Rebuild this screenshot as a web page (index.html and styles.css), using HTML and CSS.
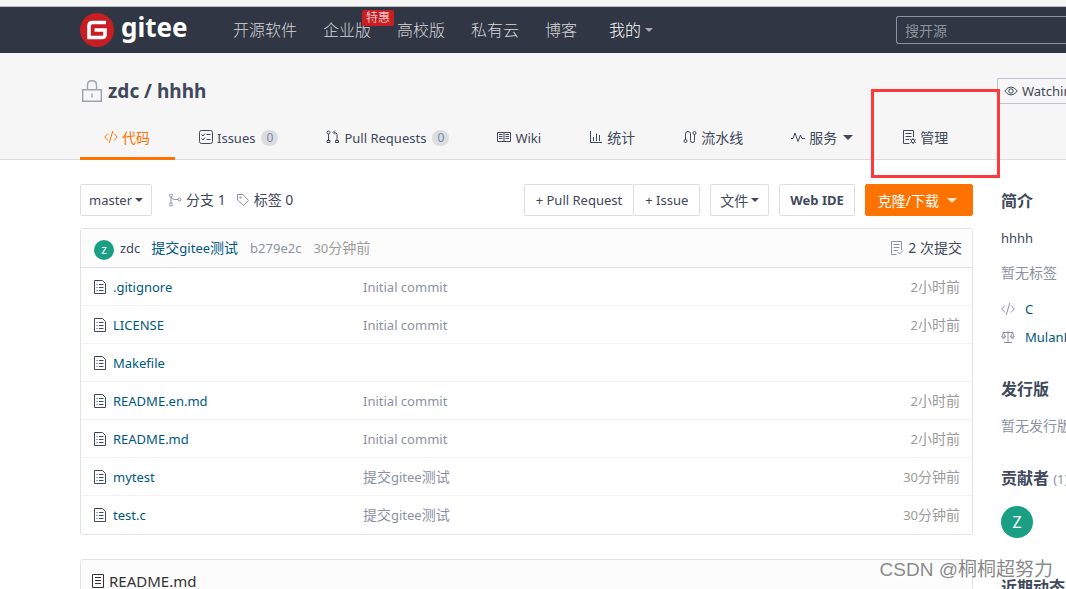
FILE: index.html
```html
<!DOCTYPE html>
<html lang="zh-CN">
<head>
<meta charset="utf-8">
<title>zdc / hhhh</title>
<link rel="stylesheet" href="styles.css">
</head>
<body>
<svg class="defs" aria-hidden="true">
  <symbol id="code" viewBox="0 0 14 14"><path d="M4 3.500L.7 7L4 10.500M10 3.500L13.300 7L10 10.500M8.800 1L5.200 13"/></symbol>
  <symbol id="issues" viewBox="0 0 14 14"><rect x=".5" y=".5" width="13" height="13" rx="2"/><path d="M2.500 4.500L4 6L6 3.500M7.500 4.500H11.500M2.500 8.500L4 10L6 7.500M7.500 9.500H11.500"/></symbol>
  <symbol id="pr" viewBox="0 0 14 14"><path d="M2.500 4V10M11 10V4.500Q11 2.500 8 2.500M9 .5L7 2.500L9 4.500M1 10.500H4V12.500H1ZM9.500 10.500H12.500V12.500H9.500Z"/><circle cx="2.500" cy="2.500" r="1.500"/></symbol>
  <symbol id="wiki" viewBox="0 0 14 14"><path d="M.5 2.500H13.500V11.500H.5ZM7 2.500V11.500M2 4.500H5.500M2 6.500H5.500M2 8.500H5.500M8.500 4.500H12M8.500 6.500H12M8.500 8.500H12"/></symbol>
  <symbol id="stats" viewBox="0 0 14 14"><path d="M1.500 1V12.500H13M4.500 11V7M7.500 11V3.500M10.500 11V5"/></symbol>
  <symbol id="pipe" viewBox="0 0 14 14"><path d="M2.500 9.500V4Q2.500 1.500 5 1.500T7.500 4V10.500Q7.500 12.500 9.500 12.500T11.500 10.500V4.500"/><circle cx="2.500" cy="11" r="1.500"/><circle cx="11.500" cy="3" r="1.500"/></symbol>
  <symbol id="pulse" viewBox="0 0 14 14"><path d="M0 8.500H2L4 3L7 11.500L9.500 5L11 8.500H14"/></symbol>
  <symbol id="manage" viewBox="0 0 14 14"><path d="M7.500 13.500H1.500V.5H11.500V7M3.500 3.500H9.500M3.500 6.500H9.500M3.500 9.500H7"/><circle cx="11" cy="11" r="1.700"/><path d="M11 8V9M11 13V14M8.300 9.500L9.300 10M12.700 12L13.700 12.500M13.700 9.500L12.700 10M9.300 12L8.300 12.500"/></symbol>
  <symbol id="branch" viewBox="0 0 14 14"><circle cx="3" cy="2.500" r="1.500"/><circle cx="3" cy="11.500" r="1.500"/><circle cx="11.500" cy="6.500" r="1.500"/><path d="M3 4V10M3 4Q4 6.500 7 6.500H10"/></symbol>
  <symbol id="tag" viewBox="0 0 14 14"><path d="M1.500 1.500H7L12.500 7.500L7.500 12.500L1.500 7Z"/><circle cx="4.500" cy="4.500" r=".8"/></symbol>
  <symbol id="file" viewBox="0 0 14 14"><path d="M1.500 .5H9.500L12.500 3.500V13.500H1.500ZM3.500 4.500H4.500M6 4.500H10.500M3.500 7.500H4.500M6 7.500H10.500M3.500 10.500H4.500M6 10.500H10.500"/></symbol>
  <symbol id="commits" viewBox="0 0 14 14"><path d="M6.500 13.500H1.500V.5H11.500V9M3.500 3.500H9.500M3.500 6.500H9.500M3.500 9.500H7.500M7.500 11L9.500 13L13 9.500"/></symbol>
  <symbol id="readme" viewBox="0 0 14 14"><path d="M1.500 .5H12.500V13.500H1.500ZM4 3.500H10M4 6.500H10M4 9.500H10"/></symbol>
  <symbol id="eye" viewBox="0 0 14 14"><path d="M.7 7Q3.500 3 7 3T13.300 7Q10.500 11 7 11T.7 7Z"/><circle cx="7" cy="7" r="2.200"/></symbol>
  <symbol id="scale" viewBox="0 0 14 14"><path d="M7 1V12.500M3 12.500H11M1.500 2.500H12.500M2.500 3L.7 7H4.600ZM11.500 3L9.400 7H13.300ZM1 8H4.300M9.700 8H13"/></symbol>
</svg>

<div class="chrome-edge"></div>
<header class="nav">
  <a class="logo" href="#">
    <svg class="logo-mark" viewBox="0 0 34 34"><circle cx="17" cy="17" r="17" fill="#c71d23"/><path d="M26 9.500H12.500Q9 9.500 9 13V24.500H22Q25 24.500 25 21.500V17H14.500" fill="none" stroke="#fff" stroke-width="3.600"/></svg>
    <span>gitee</span>
  </a>
  <nav class="nav-links">
    <a href="#">开源软件</a>
    <a href="#" class="with-flag">企业版<span class="flag">特惠</span></a>
    <a href="#">高校版</a>
    <a href="#">私有云</a>
    <a href="#">博客</a>
    <a href="#" class="mine">我的<i class="caret"></i></a>
  </nav>
  <input class="search" type="text" placeholder="搜开源" aria-label="搜开源">
</header>

<section class="repo-head">
  <div class="title-row">
    <h1><svg class="lock" viewBox="0 0 20 22"><path d="M5.500 9V5Q5.500 .7 10 .7T14.500 5V9M.7 9.700H19.300V21.300H.7ZM10 13.500V17.500"/></svg><span>zdc / hhhh</span></h1>
    <button class="btn watch"><svg class="icon"><use href="#eye"/></svg>Watching</button>
  </div>
  <nav class="tabs">
    <a href="#" class="tab active"><svg class="icon"><use href="#code"/></svg><span class="zh">代码</span></a>
    <a href="#" class="tab"><svg class="icon"><use href="#issues"/></svg>Issues<b class="count">0</b></a>
    <a href="#" class="tab"><svg class="icon"><use href="#pr"/></svg>Pull Requests<b class="count">0</b></a>
    <a href="#" class="tab"><svg class="icon"><use href="#wiki"/></svg>Wiki</a>
    <a href="#" class="tab"><svg class="icon"><use href="#stats"/></svg><span class="zh">统计</span></a>
    <a href="#" class="tab"><svg class="icon"><use href="#pipe"/></svg><span class="zh">流水线</span></a>
    <a href="#" class="tab"><svg class="icon"><use href="#pulse"/></svg><span class="zh">服务</span><i class="caret"></i></a>
    <a href="#" class="tab manage"><svg class="icon"><use href="#manage"/></svg><span class="zh">管理</span><span class="highlight"></span></a>
  </nav>
</section>

<div class="content">
  <main class="main">
    <div class="toolbar">
      <button class="btn">master<i class="caret"></i></button>
      <div class="refs">
        <a href="#"><svg class="icon"><use href="#branch"/></svg>分支 1</a>
        <a href="#"><svg class="icon"><use href="#tag"/></svg>标签 0</a>
      </div>
      <div class="actions">
        <div class="group"><button class="btn">+ Pull Request</button><button class="btn">+ Issue</button></div>
        <button class="btn zh">文件<i class="caret"></i></button>
        <button class="btn strong">Web IDE</button>
        <button class="btn primary zh">克隆/下载<i class="caret"></i></button>
      </div>
    </div>

    <div class="files">
      <div class="commit">
        <span class="avatar small">z</span>
        <span class="author">zdc</span>
        <a href="#"><span class="zh">提交</span>gitee<span class="zh">测试</span></a>
        <span class="sha">b279e2c</span>
        <span class="when">30<span class="zh">分钟前</span></span>
        <a href="#" class="total zh"><svg class="icon"><use href="#commits"/></svg>2 次提交</a>
      </div>
      <table>
        <tr><td class="name"><a href="#"><svg class="icon"><use href="#file"/></svg>.gitignore</a></td><td>Initial commit</td><td class="time">2<span class="zh">小时前</span></td></tr>
        <tr><td class="name"><a href="#"><svg class="icon"><use href="#file"/></svg>LICENSE</a></td><td>Initial commit</td><td class="time">2<span class="zh">小时前</span></td></tr>
        <tr><td class="name"><a href="#"><svg class="icon"><use href="#file"/></svg>Makefile</a></td><td></td><td class="time"></td></tr>
        <tr><td class="name"><a href="#"><svg class="icon"><use href="#file"/></svg>README.en.md</a></td><td>Initial commit</td><td class="time">2<span class="zh">小时前</span></td></tr>
        <tr><td class="name"><a href="#"><svg class="icon"><use href="#file"/></svg>README.md</a></td><td>Initial commit</td><td class="time">2<span class="zh">小时前</span></td></tr>
        <tr><td class="name"><a href="#"><svg class="icon"><use href="#file"/></svg>mytest</a></td><td><span class="zh">提交</span>gitee<span class="zh">测试</span></td><td class="time">30<span class="zh">分钟前</span></td></tr>
        <tr><td class="name"><a href="#"><svg class="icon"><use href="#file"/></svg>test.c</a></td><td><span class="zh">提交</span>gitee<span class="zh">测试</span></td><td class="time">30<span class="zh">分钟前</span></td></tr>
      </table>
    </div>

    <div class="readme"><svg class="icon"><use href="#readme"/></svg>README.md</div>
  </main>

  <aside class="side">
    <section class="intro">
      <h2>简介</h2>
      <p class="desc">hhhh</p>
      <p class="muted">暂无标签</p>
      <ul>
        <li><svg class="icon"><use href="#code"/></svg><a href="#">C</a></li>
        <li><svg class="icon"><use href="#scale"/></svg><a href="#">MulanPSL-2.0</a></li>
      </ul>
    </section>
    <section>
      <h2>发行版</h2>
      <p class="muted">暂无发行版</p>
    </section>
    <section class="people">
      <h2>贡献者 <small>(1)</small></h2>
      <span class="avatar">Z</span>
    </section>
    <section>
      <h2>近期动态</h2>
    </section>
  </aside>
</div>
<div class="watermark">CSDN @桐桐超努力</div>
</body>
</html>
```
FILE: styles.css
```css
* { box-sizing: border-box; }
html { height: 100%; overflow: hidden; }
body {
  position: relative;
  height: 100%;
  margin: 0;
  overflow: hidden;
  background: #fff;
  color: #40485b;
  font: 13px/20px "Noto Sans", "Noto Sans CJK SC", sans-serif;
  white-space: nowrap;
}
a { color: inherit; text-decoration: none; }
h1, h2, p, ul { margin: 0; padding: 0; list-style: none; }
.zh { font-size: 14px; }
.defs { position: absolute; width: 0; height: 0; }
.icon {
  flex: none;
  width: 14px;
  height: 14px;
  fill: none;
  stroke: currentColor;
}
.caret {
  display: inline-block;
  flex: none;
  border: 4px solid transparent;
  border-top-color: currentColor;
  border-bottom: 0;
}

.chrome-edge { height: 7px; background: #f5f5f5; border-bottom: 1px solid #b9bcba; }
.nav {
  display: flex;
  align-items: center;
  height: 46px;
  padding-left: 80px;
  background: #303643;
}
.logo { display: flex; align-items: center; gap: 7px; width: 153px; color: #fff; }
.logo-mark { width: 34px; height: 34px; }
.logo span { padding-bottom: 6px; font-size: 26px; font-weight: 700; line-height: 34px; }
.nav-links { display: flex; flex: 1; gap: 26px; color: #d6d7d9; font-size: 16px; font-weight: 300; line-height: 24px; }
.with-flag { position: relative; }
.flag {
  position: absolute;
  top: -8px;
  left: 39px;
  padding: 0 4px;
  border-radius: 2px;
  background: #c71d23;
  color: #fff;
  font-size: 12px;
  line-height: 16px;
}
.mine { display: flex; align-items: center; gap: 4px; margin-left: 6px; color: #fff; }
.mine .caret { color: #aaa; }
.search {
  width: 170px;
  height: 28px;
  padding: 0 8px;
  border: 1px solid #8c92a4;
  border-right: 0;
  border-radius: 3px 0 0 3px;
  background: transparent;
  font: 14px "Noto Sans CJK SC", sans-serif;
}
.search::placeholder { color: #8f939c; }

.repo-head { background: #f6f6f6; border-bottom: 1px solid #dcdcdc; padding: 25px 0 0 80px; }
.title-row { display: flex; justify-content: space-between; height: 38px; }
h1 { display: flex; align-items: center; gap: 6px; height: 26px; font-size: 19px; line-height: 26px; }
.lock { width: 20px; height: 22px; margin-left: 2px; fill: none; stroke: #9da2b4; stroke-width: 1.4; }
.watch { width: 69px; overflow: hidden; }
.title-row .watch { height: 26px; padding: 0 0 0 6px; gap: 4px; border-color: #c0c3cf; border-right: 0; border-radius: 2px 0 0 2px; background: transparent; justify-content: flex-start; }
.tabs { display: flex; margin-bottom: -1px; }
.tab { position: relative; display: flex; align-items: center; gap: 4px; height: 44px; padding: 2px 24px 0; border-bottom: 3px solid transparent; }
.tab.active { padding-right: 25px; color: #fe7300; border-color: #fe7300; }
.tab .icon { margin-top: -2px; }
.count { min-width: 17px; margin-left: 2px; border-radius: 8px; background: #dcdddf; color: #7686b0; font-size: 12px; font-weight: 400; line-height: 16px; text-align: center; }
.tab .caret { border-width: 5px 5px 0; margin-left: 2px; }
.manage { margin-left: 1px; }
.highlight { position: absolute; top: -27px; left: -7px; width: 129px; height: 89px; border: 3px solid #ff3939; }

.content { display: flex; gap: 28px; padding: 24px 0 0 80px; }
.main { flex: 1; min-width: 0; }
.toolbar { display: flex; align-items: center; margin-bottom: 12px; }
.btn {
  display: flex;
  align-items: center;
  justify-content: center;
  gap: 3px;
  height: 32px;
  padding: 0 8px;
  border: 1px solid #dce0e6;
  border-radius: 2px;
  background: #fff;
  color: inherit;
  font-family: inherit;
  font-size: 13px;
}
.btn.zh { font-size: 14px; padding: 0 9px; }
.refs { display: flex; gap: 10px; margin-left: 16px; font-size: 14px; }
.refs a { display: flex; align-items: center; gap: 4px; }
.refs .icon { stroke: #8c92a4; }
.actions { display: flex; gap: 10px; margin-left: auto; }
.group { display: flex; }
.group .btn { padding: 0 11px; }
.group .btn + .btn { margin-left: -1px; }
.btn.strong { padding: 0 10px; font-weight: 700; }
.btn.primary { gap: 8px; padding: 0 15px 0 12px; border-color: #fe7300; background: #fe7300; color: #fff; }
.primary .caret { border-width: 5px 5px 0; color: #ffe3cc; }

.files { border: 1px solid #e0e4e9; border-radius: 3px; }
.commit { display: flex; align-items: center; height: 39px; padding: 0 10px 0 13px; border-bottom: 1px solid #dce1e6; background: #fcfcfc; }
.commit > a { color: #005980; }
.commit .total { display: flex; align-items: center; gap: 4px; margin-left: auto; color: #40485b; }
.total .icon { stroke: #8c92a4; }
.author { margin: 0 11px 0 6px; }
.sha { margin: 0 12px; color: #8c92a4; }
.when { color: #9b9b9b; }
.avatar { display: flex; align-items: center; justify-content: center; width: 32px; height: 32px; border-radius: 50%; background: #1a9f85; color: #fff; font-size: 16px; }
.avatar.small { width: 20px; height: 20px; margin-top: 3px; font-size: 12px; }
table { width: 100%; border-spacing: 0; table-layout: fixed; }
td { height: 38px; padding: 0; border-bottom: 1px solid #f0f2f4; color: #8c92a4; }
tr:last-child td { border-bottom: 0; }
.name { width: 282px; padding-left: 12px; }
.name a { display: flex; align-items: center; gap: 6px; color: #005980; }
.name .icon { stroke: #40485b; }
td.time { width: 100px; padding-right: 12px; color: #9b9b9b; text-align: right; }
.readme { display: flex; align-items: center; gap: 4px; height: 43px; margin-top: 24px; padding-left: 10px; border: 1px solid #e0e4e9; border-radius: 3px; background: #fcfcfc; color: #333; font-size: 15px; }

.side { width: 65px; overflow: hidden; padding-top: 5px; }
.side section { margin-bottom: 30px; }
.side .intro { margin-bottom: 26px; }
.side .people { margin-bottom: 37px; }
h2 { font-size: 16px; line-height: 24px; }
h2 small { color: #8c92a4; font-size: 13px; font-weight: 400; }
.desc { margin-top: 15px; }
.side .muted { margin-top: 15px; color: #8c92a4; font-size: 14px; }
.side ul { margin-top: 12px; }
.side li { display: flex; align-items: center; gap: 10px; height: 28px; color: #8c92a4; }
.side li a { color: #005980; }
.side .avatar { margin-top: 15px; }

.watermark { position: absolute; right: 13px; bottom: 5px; color: #8b8b8b; font: 19px/28px "Liberation Sans", "Noto Sans CJK SC", sans-serif; text-shadow: 1px 1px #fff; }
```
